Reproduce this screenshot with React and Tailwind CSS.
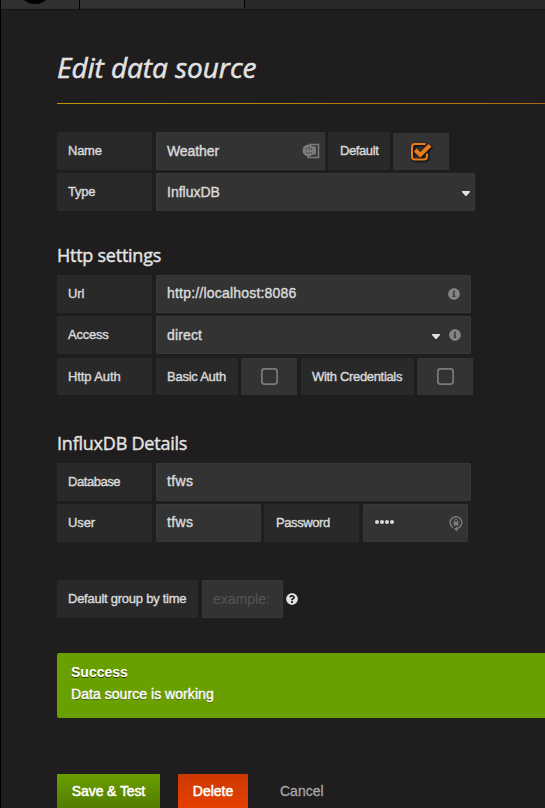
import { FaInfoCircle, FaQuestionCircle } from "react-icons/fa";

function Label({ children, className = "w-[95px]", text = "tracking-[-0.25px]" }) {
  return (
    <div className={"flex h-full shrink-0 items-center rounded-[1px] bg-[#292929] pl-[11px] text-[13px] " + className}>
      <span className={"whitespace-nowrap [-webkit-text-stroke:0.4px_#d8d9da] " + text}>{children}</span>
    </div>
  );
}

function Field({ children, className = "" }) {
  return (
    <div className={"flex h-full shrink-0 items-center rounded-[1px] border border-[#383838] bg-[#333333] pl-[10px] text-[14px] " + className}>
      {children}
    </div>
  );
}

function Value({ children, className = "" }) {
  return <span className={"whitespace-nowrap [-webkit-text-stroke:0.4px_#d8d9da] " + className}>{children}</span>;
}

function Box({ checked }) {
  return (
    <div className="mt-px flex h-[37px] w-14 shrink-0 items-center justify-center bg-[#333333]">
      {checked ? (
        <svg width="22" height="20" viewBox="0 0 22 20" className="drop-shadow-[1px_1px_1px_#000]" fill="none" stroke="#eb7b18">
          <path d="M17 11.5v3a3 3 0 0 1-3 3H5a3 3 0 0 1-3-3V5a3 3 0 0 1 3-3h9q1 0 1.7.4" strokeWidth="2" />
          <path d="M5.3 8l5 5L20 3.3" strokeWidth="4" />
        </svg>
      ) : (
        <svg width="17" height="17" viewBox="0 0 17 17" fill="none" stroke="#7b7b7b" strokeWidth="1.7">
          <rect x="0.9" y="0.9" width="15.2" height="15.2" rx="2.5" />
        </svg>
      )}
    </div>
  );
}

function Caret({ className = "" }) {
  return <svg width="8" height="5" viewBox="0 0 8 5" className={"shrink-0 " + className} fill="#e3e3e3"><path d="M0 0h8v1L4.500 5h-1L0 1z" /></svg>;
}

export default function App() {
  return (
    <div className="h-[808px] w-[545px] overflow-hidden border-l border-black bg-[#1f1d1d] font-['Liberation_Sans',Arial,sans-serif] text-[#d8d9da]">
      <header className="flex h-[10px] border-b border-[#141414] bg-[#292929]">
        <div className="flex h-[9px] w-[79px] justify-center overflow-hidden border-r border-black bg-[#303030] pr-[10px]">
          <div className="-mt-[24px] h-7 w-[30px] shrink-0 rounded-full bg-black" />
        </div>
        <div className="h-2 w-[165px] border-r border-black bg-[#333333]" />
      </header>

      <main className="pl-14">
        <h1 className="mt-[36px] h-[43px] whitespace-nowrap font-['Open_Sans',sans-serif] text-[28px] leading-[42px] tracking-[-0.05px] text-[#e3e3e3] italic [-webkit-text-stroke:0.5px_#e3e3e3]">Edit data source</h1>
        <div className="mt-[14px] h-px bg-linear-to-r from-[#b8960c] to-[#b06c10]" />

        <div className="mt-7 flex h-[38px]">
          <Label>Name</Label>
          <Field className="ml-1 w-[169px]">
            <Value className="tracking-[-0.1px]">Weather</Value>
            <svg width="18" height="16" viewBox="0 0 18 16" className="mr-1 ml-auto" fill="none">
              <path d="M7 1.500h9.500v13H6v-2" stroke="#7b7b7b" strokeWidth="1.6" />
              <circle cx="6.5" cy="7.500" r="6" fill="#7b7b7b" />
              <path d="M11 3.500h3v8h-4z" fill="#7b7b7b" />
              <path d="M4.500 5v2M4.500 9v1.500M7 4v3M7 9v2M9.500 5v2M9.500 9v1.500" stroke="#4d4d4d" strokeWidth="1" />
            </svg>
          </Field>
          <Label className="ml-[3px] w-[62px]" text="ml-px tracking-[-0.4px]">Default</Label>
          <div className="ml-[3px]"><Box checked /></div>
        </div>
        <div className="mt-[3px] flex h-[38px]">
          <Label>Type</Label>
          <Field className="ml-1 w-[319px]"><Value>InfluxDB</Value><Caret className="mt-[3px] mr-1 ml-auto" /></Field>
        </div>

        <h2 className="mt-[31px] h-[27px] font-['Open_Sans',sans-serif] text-[18px] leading-[27px] tracking-[-0.25px] text-[#e3e3e3] [-webkit-text-stroke:0.4px_#e3e3e3]">Http settings</h2>
        <div className="mt-[6px] flex h-[38px]">
          <Label text="tracking-[-0.1px]">Url</Label>
          <Field className="ml-1 w-[315px]"><Value className="-mt-[2px] tracking-[0.2px]">http://localhost:8086</Value><FaInfoCircle className="mr-[10px] ml-auto size-3 text-[#858585]" /></Field>
        </div>
        <div className="mt-[3px] flex h-[38px]">
          <Label>Access</Label>
          <Field className="ml-1 w-[315px]"><Value className="tracking-[0.15px]">direct</Value><Caret className="mt-[3px] ml-auto" /><FaInfoCircle className="mr-[9px] ml-[9px] size-3 text-[#858585]" /></Field>
        </div>
        <div className="mt-[3px] flex h-[38px]">
          <Label className="mt-px h-[37px]! w-[95px]" text="tracking-[-0.1px]">Http Auth</Label>
          <Label className="mt-px ml-1 h-[37px]! w-[82px]">Basic Auth</Label>
          <div className="ml-[3px]"><Box /></div>
          <Label className="mt-px ml-1 h-[37px]! w-[113px]" text="tracking-[-0.33px]">With Credentials</Label>
          <div className="ml-[3px]"><Box /></div>
        </div>

        <h2 className="mt-[35px] h-[27px] font-['Open_Sans',sans-serif] text-[18px] leading-[27px] tracking-[-0.22px] text-[#e3e3e3] [-webkit-text-stroke:0.4px_#e3e3e3]">InfluxDB Details</h2>
        <div className="mt-[6px] flex h-[38px]">
          <Label text="tracking-[-0.45px]">Database</Label>
          <Field className="ml-1 w-[315px]"><Value className="-mt-[2px] tracking-[0.35px]">tfws</Value></Field>
        </div>
        <div className="mt-[3px] flex h-[38px]">
          <Label text="tracking-[-0.1px]">User</Label>
          <Field className="ml-1 w-[105px]"><Value className="-mt-[2px] tracking-[0.35px]">tfws</Value></Field>
          <Label className="ml-[3px] w-[95px]" text="ml-px tracking-[-0.4px]">Password</Label>
          <Field className="ml-1 w-[105px]">
            <div className="-mt-[2px] ml-px flex gap-px">
              {[0, 1, 2, 3].map((n) => <i key={n} className="size-1 rounded-full bg-[#d8d9da]" />)}
            </div>
            <svg width="14" height="17" viewBox="0 0 14 17" className="mr-1 ml-auto" fill="none" stroke="#7b7b7b">
              <path d="M4 12.600A5.800 5.800 0 1 1 10.500 12.200L8 14" strokeWidth="1.500" />
              <path d="M8.500 11.500v5L4.800 14z" fill="#7b7b7b" stroke="none" />
              <path d="M4.500 6.500h5v4h-5z" fill="#7b7b7b" stroke="none" />
              <path d="M5.500 6.500v-1a1.500 1.500 0 0 1 3 0v1" />
            </svg>
          </Field>
        </div>

        <div className="mt-[38px] flex h-[38px] items-center">
          <Label className="w-[141px]">Default group by time</Label>
          <Field className="ml-1 w-[81px]"><span className="text-[#555]">example:</span></Field>
          <FaQuestionCircle className="ml-[3px] size-3 text-[#e3e3e3]" />
        </div>

        <div className="mt-[35px] h-[65px] rounded-l-[2px] bg-[#6a9f00] pt-[8px] pl-[14px] text-[14px] leading-[22px] text-white [text-shadow:0_1px_0_rgba(0,0,0,.6)]">
          <div className="font-bold">Success</div>
          <div className="tracking-[0.05px] [-webkit-text-stroke:0.4px_white]">Data source is working</div>
        </div>

        <div className="mt-14 flex h-9 text-[14px] leading-[34px] text-white">
          <div className="w-[103px] rounded-t-[1px] bg-linear-to-b from-[#6a9f00] to-[#517a00] text-center tracking-[-0.1px] [-webkit-text-stroke:0.5px_white]">Save &amp; Test</div>
          <div className="ml-[18px] w-[70px] rounded-t-[1px] bg-linear-to-b from-[#cc3900] to-[#e64000] text-center [-webkit-text-stroke:0.5px_white]">Delete</div>
          <div className="ml-8 text-[#a5a5a5] [-webkit-text-stroke:0.3px_#a5a5a5]">Cancel</div>
        </div>
      </main>
    </div>
  );
}
